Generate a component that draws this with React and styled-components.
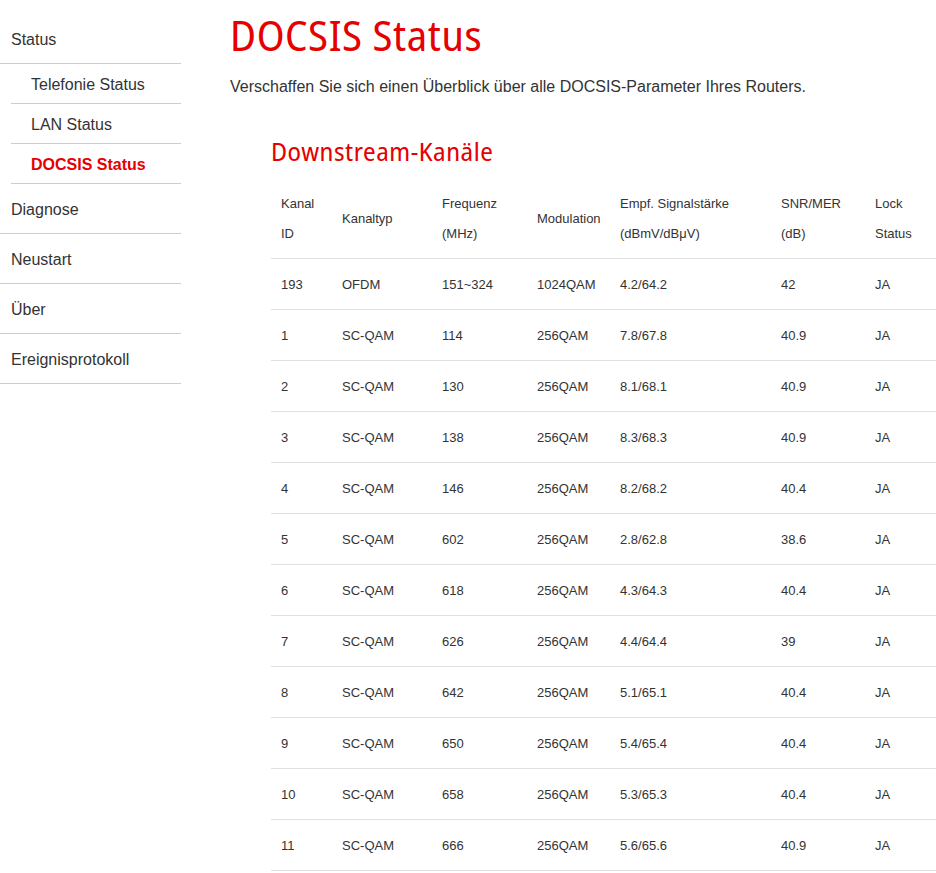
import React from "react";
import styled, { createGlobalStyle } from "styled-components";

const Global = createGlobalStyle`
  html, body { margin: 0; padding: 0; background: #fff; }
  body { font-family: "Liberation Sans", Arial, sans-serif; color: #333; overflow: hidden; }
`;

const Page = styled.div`
  display: flex;
  width: 936px;
  min-height: 873px;
  overflow: hidden;
`;

const Sidebar = styled.nav`
  flex: 0 0 181px;
  padding-top: 14px;
`;

const NavItem = styled.div`
  height: 47px;
  padding: 2px 0 0 11px;
  display: flex;
  align-items: center;
  font-size: 16px;
  color: #333;
  border-bottom: 1px solid #ccc;
`;

const SubList = styled.div`
  padding-left: 11px;
`;

const SubItem = styled.div`
  height: 37px;
  display: flex;
  align-items: center;
  padding: 2px 0 0 20px;
  font-size: 16px;
  color: ${(p) => (p.$active ? "#e60000" : "#333")};
  font-weight: ${(p) => (p.$active ? "bold" : "normal")};
  border-bottom: 1px solid #ccc;
`;

const Main = styled.main`
  flex: 1;
  min-width: 0;
  padding-left: 49px;
`;

const Title = styled.h1`
  margin: 7px 0 0 0;
  font-family: "Noto Sans Display", "Open Sans", "Liberation Sans", sans-serif;
  font-stretch: semi-condensed;
  font-weight: 400;
  font-size: 42px;
  letter-spacing: 0.6px;
  line-height: 56px;
  color: #e60000;
`;

const Lead = styled.p`
  margin: 13px 0 0 0;
  font-size: 16px;
  line-height: 22px;
  color: #333;
`;

const Section = styled.section`
  margin-left: 41px;
  margin-top: 36px;
`;

const SectionTitle = styled.h2`
  margin: 0;
  font-family: "Noto Sans Display", "Open Sans", "Liberation Sans", sans-serif;
  font-stretch: semi-condensed;
  font-weight: 400;
  font-size: 26px;
  letter-spacing: 0.5px;
  line-height: 34px;
  color: #e60000;
`;

const Table = styled.table`
  margin-top: 14px;
  border-collapse: collapse;
  width: 720px;
  table-layout: fixed;
  font-size: 13px;
  color: #333;
`;

const Th = styled.th`
  text-align: left;
  font-weight: normal;
  padding: 0 10px 2px 10px;
  height: 74px;
  line-height: 30px;
  border-bottom: 1px solid #e0e0e0;
  vertical-align: middle;
`;

const Td = styled.td`
  padding: 0 10px;
  height: 50px;
  border-bottom: 1px solid #e0e0e0;
  vertical-align: middle;
`;

const cols = [61, 100, 95, 83, 161, 94, 126];

const headers = [
  ["Kanal", "ID"],
  ["Kanaltyp"],
  ["Frequenz", "(MHz)"],
  ["Modulation"],
  ["Empf. Signalstärke", "(dBmV/dBμV)"],
  ["SNR/MER", "(dB)"],
  ["Lock", "Status"],
];

const rows = [
  ["193", "OFDM", "151~324", "1024QAM", "4.2/64.2", "42", "JA"],
  ["1", "SC-QAM", "114", "256QAM", "7.8/67.8", "40.9", "JA"],
  ["2", "SC-QAM", "130", "256QAM", "8.1/68.1", "40.9", "JA"],
  ["3", "SC-QAM", "138", "256QAM", "8.3/68.3", "40.9", "JA"],
  ["4", "SC-QAM", "146", "256QAM", "8.2/68.2", "40.4", "JA"],
  ["5", "SC-QAM", "602", "256QAM", "2.8/62.8", "38.6", "JA"],
  ["6", "SC-QAM", "618", "256QAM", "4.3/64.3", "40.4", "JA"],
  ["7", "SC-QAM", "626", "256QAM", "4.4/64.4", "39", "JA"],
  ["8", "SC-QAM", "642", "256QAM", "5.1/65.1", "40.4", "JA"],
  ["9", "SC-QAM", "650", "256QAM", "5.4/65.4", "40.4", "JA"],
  ["10", "SC-QAM", "658", "256QAM", "5.3/65.3", "40.4", "JA"],
  ["11", "SC-QAM", "666", "256QAM", "5.6/65.6", "40.9", "JA"],
];

export default function App() {
  return (
    <>
      <Global />
      <Page>
        <Sidebar>
          <NavItem>Status</NavItem>
          <SubList>
            <SubItem>Telefonie Status</SubItem>
            <SubItem>LAN Status</SubItem>
            <SubItem $active>DOCSIS Status</SubItem>
          </SubList>
          <NavItem>Diagnose</NavItem>
          <NavItem>Neustart</NavItem>
          <NavItem>Über</NavItem>
          <NavItem>Ereignisprotokoll</NavItem>
        </Sidebar>
        <Main>
          <Title>DOCSIS Status</Title>
          <Lead>Verschaffen Sie sich einen Überblick über alle DOCSIS-Parameter Ihres Routers.</Lead>
          <Section>
            <SectionTitle>Downstream-Kanäle</SectionTitle>
            <Table>
              <colgroup>
                {cols.map((w, i) => (
                  <col key={i} style={{ width: w }} />
                ))}
              </colgroup>
              <thead>
                <tr>
                  {headers.map((h, i) => (
                    <Th key={i}>
                      {h.map((l, j) => (
                        <div key={j}>{l}</div>
                      ))}
                    </Th>
                  ))}
                </tr>
              </thead>
              <tbody>
                {rows.map((r, i) => (
                  <tr key={i}>
                    {r.map((c, j) => (
                      <Td key={j}>{c}</Td>
                    ))}
                  </tr>
                ))}
              </tbody>
            </Table>
          </Section>
        </Main>
      </Page>
    </>
  );
}
